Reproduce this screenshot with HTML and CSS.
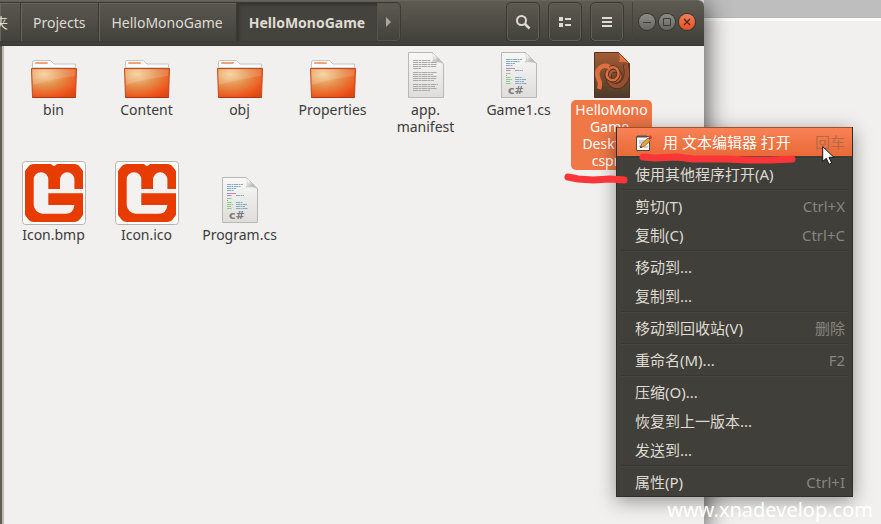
FILE: index.html
```html
<!DOCTYPE html>
<html lang="zh-CN">
<head>
<meta charset="utf-8">
<title>HelloMonoGame</title>
<link rel="stylesheet" href="styles.css">
</head>
<body>
<svg class="defs" aria-hidden="true">
  <defs>
    <radialGradient id="folder-face" cx=".28" cy=".2" r=".95"><stop offset="0" stop-color="#f6cf97"/><stop offset=".45" stop-color="#e58d49"/><stop offset=".85" stop-color="#ee5119"/><stop offset="1" stop-color="#d94a15"/></radialGradient>
    <linearGradient id="paper" x2="0" y2="1"><stop offset="0" stop-color="#f8f8f7"/><stop offset="1" stop-color="#dedddb"/></linearGradient>
    <linearGradient id="brown" x2="0" y2="1"><stop offset="0" stop-color="#a65a34"/><stop offset="1" stop-color="#4a3c2a"/></linearGradient>
    <linearGradient id="fold" x2="1" y2="1"><stop offset=".2" stop-color="#fff"/><stop offset=".6" stop-color="#bdbcba"/></linearGradient>
    <symbol id="folder" viewBox="0 0 46 38">
      <path d="M1.500 12V2q0-1.500 1.500-1.500h16.500L23 4h21.500v8z" fill="#fbfbfb" stroke="#c6c5c3"/>
      <rect x="4" y="2" width="13" height="2" rx="1" fill="#eea477"/>
      <path d="M2 8h42" stroke="#dcdcdb" stroke-width="2"/>
      <path d="M.5 8.500h45L44.500 37.500h-43z" fill="url(#folder-face)" stroke="#bd4a20"/>
      <path d="M1.500 9.500h43L44 16Q20 19 2 25z" fill="#fff" opacity=".14"/>
      <path d="M1.500 37.500h43" stroke="#8f3009" opacity=".6"/>
    </symbol>
    <symbol id="page" viewBox="0 0 36 46">
      <path d="M.5.500h24l11 11v34H.5z" fill="url(#paper)" stroke="#b9b8b5"/>
      <path d="M24.500.500q2 9-.5 9.500 7-1 11.500 1.500z" fill="url(#fold)" stroke="#c5c4c2" stroke-width=".6"/>
    </symbol>
    <symbol id="text-file" viewBox="0 0 36 46">
      <use href="#page"/>
      <g stroke="#aaa9a7" stroke-width="1" stroke-dasharray="5 .5 3 .5">
        <path d="M5 8.500h18M5 10.500h24M5 12.500h24M5 14.500h23M5 16.500h8M5 20.500h24M5 22.500h20M5 24.500h24M5 26.500h23M5 28.500h21M5 32.500h25M5 34.500h22M5 36.500h24M5 38.500h17"/>
      </g>
    </symbol>
    <symbol id="code-file" viewBox="0 0 36 46">
      <use href="#page"/>
      <g stroke-dasharray="4 .5 2 .5">
        <path d="M5 7.500h16M5 9.500h14M5 11.500h9M5 13.500h7M14 18.500h8M14 25.500h7M14 27.500h11M14 29.500h9M14 31.500h12" stroke="#82abc4"/>
        <path d="M5 16.500h9M5 18.500h5M5 23.500h1" stroke="#af86bd"/><path d="M9 16.500h5" stroke="#d584a8"/>
        <path d="M5 21.500h5M5 25.500h5M5 27.500h6M5 29.500h4M5 31.500h5" stroke="#8bcf7e"/>
      </g>
      <text x="7" y="42" class="file-tag">c#</text>
    </symbol>
    <symbol id="monogame" viewBox="0 0 64 64">
      <rect x=".5" y=".5" width="63" height="63" rx="3" fill="#fff" stroke="#b6b5b1"/>
      <path d="M3 10L6 6Q8 3 12 3H29Q31 5 32 5T35 3H52Q56 3 58 6L61 10V54L58 58Q56 61 52 61H12Q8 61 6 58L3 54z" fill="#e73c00"/>
      <path d="M11.700 18.500a7.300 7.300 0 0 1 14.600 0V28H38v-9.500a7.200 7.200 0 0 1 14.400 0V28H61v4.300H26.300V44h26.100q-1 8.700-8.700 8.700H20.400q-7.700-1-8.700-8.700z" fill="#f3f2f0"/>
    </symbol>
  </defs>
</svg>

<main class="desktop">
  <section class="window" aria-label="HelloMonoGame">
    <header class="titlebar">
      <nav class="pathbar" aria-label="路径">
        <button class="crumb crumb-cut">夹</button>
        <button class="crumb">Projects</button>
        <button class="crumb">HelloMonoGame</button>
        <button class="crumb crumb-current" aria-current="page">HelloMonoGame</button>
        <button class="crumb-next" aria-label="下一级"><svg width="6" height="12" viewBox="0 0 6 12"><path d="M0 1l5 5-5 5z" fill="#a8a6a0"/></svg></button>
      </nav>
      <div class="tools">
        <button class="tool" aria-label="搜索"><svg width="16" height="16" viewBox="0 0 16 16" fill="none" stroke="#dfdbd2"><circle cx="6.500" cy="6.500" r="4.500" stroke-width="2"/><path d="M10 10l4.500 4.500" stroke-width="2.500"/></svg></button>
        <button class="tool" aria-label="列表视图"><svg width="16" height="16" viewBox="0 0 16 16" fill="#dfdbd2"><path d="M2 3h4v4H2zM8 4h6v2H8zM2 9h4v4H2zM8 10h6v2H8z"/></svg></button>
        <button class="tool" aria-label="菜单"><svg width="16" height="16" viewBox="0 0 16 16" fill="#dfdbd2"><path d="M3 3h10v2H3zM3 7h10v2H3zM3 11h10v2H3z"/></svg></button>
      </div>
      <div class="controls">
        <button class="control" aria-label="最小化"><svg width="10" height="10" viewBox="0 0 10 10"><path d="M1 5.500h8" stroke="#3b3a35"/></svg></button>
        <button class="control" aria-label="最大化"><svg width="10" height="10" viewBox="0 0 10 10"><path d="M1.500 1.500h7v7h-7z" fill="none" stroke="#3b3a35"/></svg></button>
        <button class="control control-close" aria-label="关闭"><svg width="10" height="10" viewBox="0 0 10 10"><path d="M2 2l6 6M8 2L2 8" stroke="#4f2516" stroke-width="1.300"/></svg></button>
      </div>
    </header>
    <ul class="files">
      <li class="file"><span class="file-icon"><svg width="46" height="38"><use href="#folder"/></svg></span><span class="file-name">bin</span></li>
      <li class="file"><span class="file-icon"><svg width="46" height="38"><use href="#folder"/></svg></span><span class="file-name">Content</span></li>
      <li class="file"><span class="file-icon"><svg width="46" height="38"><use href="#folder"/></svg></span><span class="file-name">obj</span></li>
      <li class="file"><span class="file-icon"><svg width="46" height="38"><use href="#folder"/></svg></span><span class="file-name">Properties</span></li>
      <li class="file"><span class="file-icon"><svg width="36" height="46"><use href="#text-file"/></svg></span><span class="file-name">app.<br>manifest</span></li>
      <li class="file"><span class="file-icon"><svg width="36" height="46"><use href="#code-file"/></svg></span><span class="file-name">Game1.cs</span></li>
      <li class="file file-selected"><span class="file-icon"><svg width="36" height="46" viewBox="0 0 36 46"><path d="M.5.500h24l11 11v34H.5z" fill="url(#brown)" stroke="#513324"/><path d="M25 1q2 9-1 9 8-1 11.500 1.500z" fill="#e8703f"/><g fill="none"><path d="M31.500 12Q35 24 30 30T19 33Q14 30 15 24" stroke="#4d2f20" stroke-width="6"/><path d="M31.500 12Q35 24 30 30T19 33Q14 30 15 24" stroke="#96502f" stroke-width="4.500"/><path d="M5 37Q7 31 4.500 27Q1 18 8 14.500Q14 12 17.500 18" stroke="#dd6f3e" stroke-width="4.500"/><circle cx="21" cy="24" r="5.500" stroke="#4d2f20" stroke-width="4"/><circle cx="21" cy="24" r="5.500" stroke="#b05c35" stroke-width="2.500"/><path d="M14 18q-3 6 1 9 5 3 8-1t0-9q-3-3-7-1" stroke="#4d2f20" stroke-width="4"/><path d="M14 18q-3 6 1 9 5 3 8-1t0-9q-3-3-7-1" stroke="#dd6f3e" stroke-width="2.500"/></g></svg></span><span class="file-name">HelloMono<br>Game.<br>Desktop.<br>csproj</span></li>
      <li class="file"><span class="file-icon"><svg width="64" height="64"><use href="#monogame"/></svg></span><span class="file-name">Icon.bmp</span></li>
      <li class="file"><span class="file-icon"><svg width="64" height="64"><use href="#monogame"/></svg></span><span class="file-name">Icon.ico</span></li>
      <li class="file"><span class="file-icon file-icon-raised"><svg width="36" height="46"><use href="#code-file"/></svg></span><span class="file-name">Program.cs</span></li>
    </ul>
  </section>
  <aside class="backdrop"></aside>

  <div class="menu" role="menu">
    <button class="item item-active" role="menuitem"><svg class="item-icon" width="18" height="18" viewBox="0 0 18 18"><path d="M1.500 2.500h13v14h-13z" fill="#f6f6f3" stroke="#4b4a45"/><path d="M3 1v3M5 1v3M7 1v3M9 1v3M11 1v3" stroke="#55534e"/><path d="M4 7h6M4 9h4M4 12h3M9 13h4" stroke="#aaa"/><path d="M5.500 13.500l1-3.500 6.500-6 2.500 2.500-6.500 6z" fill="#e9a13b" stroke="#86501b" stroke-width=".8"/><path d="M13 3l1.500-1.500q2-.5 2.500 2L16 5.500z" fill="#e23a3a"/><path d="M5 14l.5-2 1.500 1.500z" fill="#222"/></svg><span>用 文本编辑器 打开</span><kbd>回车</kbd></button>
    <hr>
    <button class="item" role="menuitem"><span>使用其他程序打开(A)</span></button>
    <hr>
    <button class="item" role="menuitem"><span>剪切(T)</span><kbd>Ctrl+X</kbd></button>
    <button class="item" role="menuitem"><span>复制(C)</span><kbd>Ctrl+C</kbd></button>
    <hr>
    <button class="item" role="menuitem"><span>移动到...</span></button>
    <button class="item" role="menuitem"><span>复制到...</span></button>
    <hr>
    <button class="item" role="menuitem"><span>移动到回收站(V)</span><kbd>删除</kbd></button>
    <hr>
    <button class="item" role="menuitem"><span>重命名(M)...</span><kbd>F2</kbd></button>
    <hr>
    <button class="item" role="menuitem"><span>压缩(O)...</span></button>
    <button class="item" role="menuitem"><span>恢复到上一版本...</span></button>
    <button class="item" role="menuitem"><span>发送到...</span></button>
    <hr>
    <button class="item" role="menuitem"><span>属性(P)</span><kbd>Ctrl+I</kbd></button>
    <svg class="pointer" width="13" height="21" viewBox="0 0 13 21"><path d="M.7 1.500v15l3.600-3.200 2.700 6 2.700-1.200-2.700-5.800h4.900z" fill="#fff" stroke="#111"/></svg>
  </div>
  <svg class="marks" width="240" height="32" viewBox="0 0 240 32" fill="none" stroke="#fc3638" stroke-linecap="round" stroke-linejoin="round"><path d="M79 4l12 1 22-1 16 2h34l20 1 24 0 21-1" stroke-width="7"/><path d="M4 24l10 2 15 1 17-1 14 1" stroke-width="7"/></svg>
  <p class="watermark">www.xnadevelop.com</p>
</main>
</body>
</html>
```
FILE: styles.css
```css
* { box-sizing: border-box; }

body {
  margin: 0;
  font: 14px/17px "Noto Sans", "Noto Sans CJK SC", sans-serif;
  color: #3c3c3c;
}

button { font: inherit; color: inherit; border: 0; padding: 0; background: none; }

.defs { position: absolute; width: 0; height: 0; }

.desktop {
  position: relative;
  display: flex;
  min-height: 100vh;
  overflow: hidden;
  background: #f1f0ee;
}

.window {
  position: relative;
  z-index: 1;
  flex: 1;
  background: linear-gradient(90deg, #5f5d52 2px, #bdb8b4 2px, #bdb8b4 4px, #f1f0ee 4px);
  border-top-right-radius: 6px;
  box-shadow: 0 6px 24px 2px rgba(0, 0, 0, .7);
}

.backdrop {
  width: 177px;
  background: linear-gradient(#bebebe 17px, #b6b6b6 17px, #b6b6b6 18px, #fbfbfb 18px, #fbfbfb 21px, #f1f0ee 21px);
}

.titlebar {
  display: flex;
  height: 46px;
  padding: 1px 9px 3px 0;
  color: #dfdbd2;
  background: linear-gradient(#5e5b52, #3f3e39);
  border-top: 1px solid #68665c;
  border-bottom: 1px solid #3a3834;
  border-top-right-radius: 6px;
}

.pathbar {
  display: flex;
  border: 1px solid #3b3a35;
  border-left: 0;
  border-radius: 0 5px 5px 0;
}

.crumb {
  padding: 0 12px;
  border-right: 1px solid #3b3a35;
  box-shadow: inset 1px 1px #66645b;
  background: linear-gradient(#5a574f, #43423d);
}

.crumb:not(.crumb-current) { padding: 0 13px 0 12px; }

.crumb.crumb-cut {
  display: flex;
  align-items: center;
  justify-content: flex-end;
  width: 21px;
  padding: 0 12px 0 0;
  overflow: hidden;
}

.crumb-current {
  font-weight: bold;
  border-right: 0;
  background: #45433e;
  box-shadow: inset 2px 2px 3px #35342f;
}

.crumb-next {
  display: grid;
  place-items: center;
  width: 23px;
  border-radius: 0 4px 4px 0;
  box-shadow: inset 0 0 0 1px #55534b;
}

.tools {
  display: flex;
  gap: 8px;
  margin-left: auto;
  padding-right: 8px;
}

.tool {
  display: grid;
  place-items: center;
  width: 34px;
  border: 1px solid #393833;
  border-radius: 5px;
  box-shadow: inset 0 0 0 1px #605e55;
}

.controls {
  display: flex;
  align-items: center;
  gap: 4px;
  padding-left: 6px;
  border-left: 1px solid #45433e;
}

.control {
  display: grid;
  place-items: center;
  width: 16px;
  height: 16px;
  border-radius: 50%;
  background: linear-gradient(#8f8d87, #686660);
  box-shadow: 0 0 0 1px #35342f;
}

.control-close { background: linear-gradient(#f3805b, #e3501f); }

.files {
  display: grid;
  grid-template-columns: repeat(auto-fill, 93px);
  grid-auto-rows: 111px;
  margin: 0;
  padding: 4px 0 0 7px;
  list-style: none;
}

.file {
  display: flex;
  flex-direction: column;
  align-items: center;
  gap: 2px;
}

.file-icon {
  display: flex;
  align-items: flex-end;
  min-height: 48px;
}

.file:nth-child(n + 8) { gap: 0; }

.file:nth-child(n + 8) .file-icon { height: 64px; }

.file .file-icon-raised { padding-bottom: 2px; }

.file-name {
  padding: 1px 4px;
  border-radius: 5px;
  text-align: center;
}

.file-selected .file-name { color: #fff; background: #f07746; }

.file-tag { font: bold 11px "DejaVu Sans", sans-serif; fill: #7c7b79; }

.menu {
  position: absolute;
  z-index: 2;
  top: 127px;
  right: 28px;
  width: 237px;
  border: 1px solid #2f2e2a;
  border-top: 0;
  background: #403f3a;
  color: #dfdbd2;
  box-shadow: 0 4px 18px rgba(0, 0, 0, .4);
}

.item {
  display: flex;
  align-items: center;
  width: 100%;
  height: 29px;
  padding: 2px 7px 0 18px;
  font-size: 15px;
  white-space: nowrap;
}

.item kbd { margin-left: auto; font: inherit; color: #87857f; }

.item-icon { margin-right: 10px; }

.item-active {
  color: #fff;
  background: linear-gradient(#a94c27 1px, #f98256 1px, #e86a37);
}

.item-active kbd { color: #b6684a; }

.menu hr {
  height: 3px;
  margin: 0 4px;
  border: 0;
  background: linear-gradient(transparent 1px, #373631 1px, #373631 2px, #464540 2px);
}

.pointer { position: absolute; top: 18px; right: 17px; }

.marks { position: absolute; z-index: 3; top: 153px; right: 77px; }

.watermark {
  position: absolute;
  z-index: 3;
  right: 8px;
  bottom: 2px;
  margin: 0;
  font-size: 20px;
  line-height: 24px;
  color: #fff;
}
```
